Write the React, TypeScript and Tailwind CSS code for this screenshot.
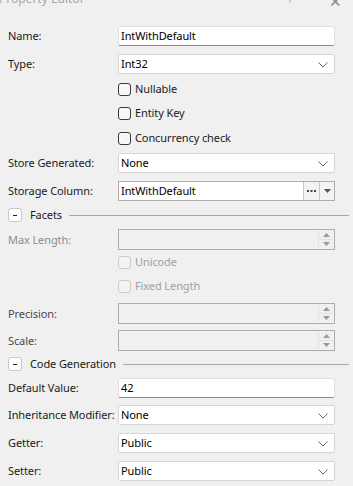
import React from "react";

const font = { fontFamily: '"Noto Sans", "Open Sans", sans-serif' };

function Chevron() {
  return (
    <svg width="10" height="6" viewBox="0 0 10 6" className="absolute right-[6px] top-[7px]">
      <path d="M0.5 0.5 L5 5 L9.5 0.5" fill="none" stroke="#6b6b6b" strokeWidth="1" />
    </svg>
  );
}

function Label({ children, tone }: { children: React.ReactNode; tone?: string }) {
  return (
    <div className={"w-[118px] shrink-0 pl-[8px] text-[11px] tracking-[-0.1px] leading-[20px] whitespace-nowrap " + (tone ?? "text-[#1b1b1b]")}>
      {children}
    </div>
  );
}

function TextInput({ value }: { value: string }) {
  return (
    <div className="relative w-[217px] h-[20px] bg-white border border-[#e0e0e0] border-b-[#8a8a8a] rounded-[2px] pl-[2px] text-[11px] tracking-[-0.1px] leading-[18px] text-black">
      {value}
    </div>
  );
}

function Select({ value }: { value: string }) {
  return (
    <div className="relative w-[217px] h-[20px] bg-white border border-[#d6d6d6] rounded-[2px] pl-[2px] text-[11px] tracking-[-0.1px] leading-[18px] text-black">
      {value}
      <Chevron />
    </div>
  );
}

function Spinner() {
  return (
    <div className="absolute right-[1px] top-[1px] bottom-[1px] w-[15px] flex flex-col border-l border-[#e2e2e2]">
      <div className="flex-1 flex items-center justify-center border-b border-[#e2e2e2]">
        <svg width="7" height="4" viewBox="0 0 7 4"><path d="M0 4 L3.5 0 L7 4 Z" fill="#9a9a9a" /></svg>
      </div>
      <div className="flex-1 flex items-center justify-center">
        <svg width="7" height="4" viewBox="0 0 7 4"><path d="M0 0 L3.5 4 L7 0 Z" fill="#9a9a9a" /></svg>
      </div>
    </div>
  );
}

function DisabledNum() {
  return (
    <div className="relative w-[217px] h-[21px] bg-[#f0f0f0] border border-[#adadad]">
      <Spinner />
    </div>
  );
}

function Check({ label, disabled, h }: { label: string; disabled?: boolean; h: string }) {
  return (
    <div className={"flex items-center pl-[118px] " + h}>
      <div className={"w-[13px] h-[13px] rounded-[3px] border " + (disabled ? "border-[#c9c9c9] bg-[#f3f3f3]" : "border-[#3a3a3a] bg-[#f7f7f7]")} />
      <span className={"ml-[4px] text-[11px] tracking-[-0.1px] " + (disabled ? "text-[#a0a0a0]" : "text-[#1b1b1b]")}>{label}</span>
    </div>
  );
}

function Section({ title, className }: { title: string; className: string }) {
  return (
    <div className={"flex items-center h-[14px] pl-[8px] " + className}>
      <div className="w-[14px] h-[14px] rounded-[3px] border border-[#c8c8c8] bg-white flex items-center justify-center">
        <div className="w-[4px] h-[1px] bg-[#222]" />
      </div>
      <span className="ml-[8px] text-[11px] tracking-[-0.1px] text-[#1b1b1b] whitespace-nowrap">{title}</span>
      <div className="flex-1 h-[1px] bg-[#a8a8a8] ml-[7px] mr-[4px]" />
    </div>
  );
}

export default function App() {
  return (
    <div className="w-[353px] h-[486px] bg-[#f0f0f0] overflow-hidden relative" style={font}>
      <div className="h-[16px] relative overflow-hidden">
        <div className="absolute left-[-1px] top-[-10px] text-[12px] text-[#a8a8a8] whitespace-nowrap">Property Editor</div>
        <div className="absolute left-[288px] top-[-11px] text-[12px] text-[#a8a8a8]">?</div>
        <div className="absolute left-[329px] top-[-10px] text-[15px] text-[#8a8a8a]">✕</div>
      </div>
      <div className="flex items-center mt-[10px]">
        <Label>Name:</Label>
        <TextInput value="IntWithDefault" />
      </div>
      <div className="flex items-center mt-[8px]">
        <Label>Type:</Label>
        <Select value="Int32" />
      </div>
      <div className="mt-[3px]">
        <Check label="Nullable" h="h-[24px]" />
        <Check label="Entity Key" h="h-[25px]" />
        <Check label="Concurrency check" h="h-[24px]" />
      </div>
      <div className="flex items-center mt-[3px]">
        <Label>Store Generated:</Label>
        <Select value="None" />
      </div>
      <div className="flex items-center mt-[8px]">
        <Label>Storage Column:</Label>
        <div className="relative w-[217px] h-[20px] bg-white border border-[#adadad] flex text-[11px] tracking-[-0.1px] leading-[18px] text-black">
          <div className="flex-1 pl-[2px]">IntWithDefault</div>
          <div className="w-[16px] border-l border-[#c8c8c8] bg-[#f3f3f3] flex items-center justify-center">
            <svg width="9" height="2" viewBox="0 0 9 2"><rect x="0" y="0" width="2" height="2" fill="#444" /><rect x="3.5" y="0" width="2" height="2" fill="#444" /><rect x="7" y="0" width="2" height="2" fill="#444" /></svg>
          </div>
          <div className="w-[15px] border-l border-[#c8c8c8] bg-[#f3f3f3] flex items-center justify-center">
            <svg width="7" height="4" viewBox="0 0 7 4"><path d="M0 0 L3.5 4 L7 0 Z" fill="#555" /></svg>
          </div>
        </div>
      </div>
      <Section title="Facets" className="mt-[7px]" />
      <div className="flex items-center mt-[7px]">
        <Label tone="text-[#8c8c8c]">Max Length:</Label>
        <DisabledNum />
      </div>
      <div>
        <Check label="Unicode" disabled h="h-[24px]" />
        <Check label="Fixed Length" disabled h="h-[24px]" />
      </div>
      <div className="flex items-center mt-[5px]">
        <Label tone="text-[#4a4a4a]">Precision:</Label>
        <DisabledNum />
      </div>
      <div className="flex items-center mt-[6px]">
        <Label tone="text-[#4a4a4a]">Scale:</Label>
        <DisabledNum />
      </div>
      <Section title="Code Generation" className="mt-[6px]" />
      <div className="flex items-center mt-[7px]">
        <Label>Default Value:</Label>
        <TextInput value="42" />
      </div>
      <div className="flex items-center mt-[7px]">
        <Label>Inheritance Modifier:</Label>
        <Select value="None" />
      </div>
      <div className="flex items-center mt-[8px]">
        <Label>Getter:</Label>
        <Select value="Public" />
      </div>
      <div className="flex items-center mt-[8px]">
        <Label>Setter:</Label>
        <Select value="Public" />
      </div>
    </div>
  );
}
